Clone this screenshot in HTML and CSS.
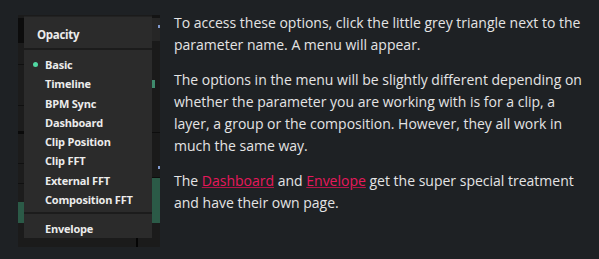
FILE: index.html
```html
<!DOCTYPE html>
<html>
<head>
<meta charset="utf-8">
<link rel="stylesheet" href="styles.css">
</head>
<body>
<div class="page">
  <div class="shot">
    <div class="strip strip-left">
      <div class="seg s-l1"></div>
      <div class="seg s-l2"></div>
      <div class="seg s-l3"></div>
      <div class="seg s-green s-l4"></div>
      <div class="seg s-l5"></div>
    </div>
    <div class="strip strip-right">
      <div class="seg s-r1"></div>
      <div class="seg s-r2"><span class="r-dot"></span></div>
      <div class="seg s-r3"><span class="r-tick"></span></div>
      <div class="seg s-r4"><span class="r-dot low"></span></div>
      <div class="seg s-green s-r5"></div>
      <div class="seg s-r6"></div>
    </div>
    <span class="bb-mark"></span>
    <div class="menu">
      <div class="menu-head">Opacity</div>
      <ul class="menu-list">
        <li class="item active">Basic</li>
        <li class="item">Timeline</li>
        <li class="item">BPM Sync</li>
        <li class="item">Dashboard</li>
        <li class="item">Clip Position</li>
        <li class="item">Clip FFT</li>
        <li class="item">External FFT</li>
        <li class="item">Composition FFT</li>
      </ul>
      <ul class="menu-list last">
        <li class="item">Envelope</li>
      </ul>
    </div>
  </div>
  <div class="text">
    <p>To access these options, click the little grey triangle next to the parameter name. A menu will appear.</p>
    <p>The options in the menu will be slightly different depending on whether the parameter you are working with is for a clip, a layer, a group or the composition. However, they all work in much the same way.</p>
    <p>The <a href="#">Dashboard</a> and <a href="#">Envelope</a> get the super special treatment and have their own page.</p>
  </div>
</div>
</body>
</html>
```
FILE: styles.css
```css
* { box-sizing: border-box; }
html, body { margin: 0; padding: 0; }
body {
  background: #1e2124;
  width: 599px;
  height: 259px;
  overflow: hidden;
}
.page {
  display: flex;
  align-items: flex-start;
}
.shot {
  position: relative;
  margin-left: 18px;
  margin-top: 15px;
  width: 142px;
  height: 232px;
  background: #1b1b1b;
  display: flex;
  justify-content: space-between;
}
.strip {
  display: flex;
  flex-direction: column;
  height: 232px;
}
.strip-left { width: 6px; }
.strip-right { width: 8px; }
.seg { position: relative; flex: none; }
.s-green { background: #2b5a47; }
.s-l1 { height: 3px; background: #1b1b1b; }
.s-l2 { height: 25px; background: #0c0c0c; }
.s-l3 {
  height: 159px;
  background: #1c1c1c;
  background-image:
    linear-gradient(#101010, #101010),
    linear-gradient(#101010, #101010),
    linear-gradient(#0a0a0a, #0a0a0a),
    linear-gradient(#101010, #101010),
    linear-gradient(#101010, #101010),
    linear-gradient(#101010, #101010);
  background-repeat: no-repeat;
  background-size: 6px 1px, 6px 1px, 6px 3px, 6px 1px, 6px 1px, 6px 1px;
  background-position: 0 21px, 0 62px, 0 88px, 0 120px, 0 140px, 0 160px;
}
.s-l4 { height: 21px; }
.s-l5 { height: 24px; background: #1b1b1b; }
.s-r1 { height: 3px; background: #141414; }
.s-r2 { height: 23px; background: #262626; }
.s-r3 { height: 92px; background: #1a1a1a; border-bottom: 1px solid #0d0d0d; }
.s-r4 { height: 45px; background: #1a1a1a; border-bottom: 1px solid #0d0d0d; }
.s-r5 { height: 45px; }
.s-r6 { height: 24px; background: #1b1b1b; }
.r-dot {
  position: absolute;
  right: 0; top: 7px;
  width: 2px; height: 3px;
  background: #7f98cc;
}
.r-dot.low { top: 33px; }
.r-tick {
  position: absolute;
  left: 0; top: 39px;
  width: 3px; height: 8px;
  background: #3f8a6c;
}
.bb-mark {
  position: absolute;
  left: 118px; bottom: 0;
  width: 2px; height: 10px;
  background: #050505;
}
.menu {
  position: absolute;
  left: 6px; top: 1px;
  width: 128px;
  height: 222px;
  background: #2b2b2b;
  border-top: 1px solid #222;
  font-family: "Open Sans", "DejaVu Sans", sans-serif;
  font-weight: 700;
  color: #ececec;
}
.menu-head {
  height: 33px;
  padding-left: 13px;
  font-size: 11.5px;
  letter-spacing: -0.3px;
  line-height: 36px;
  border-bottom: 2px solid #1c1c1c;
}
.menu-list {
  list-style: none;
  margin: 0;
  padding: 5px 0 3px;
}
.menu-list.last {
  border-top: 2px solid #1c1c1c;
  padding-top: 5px;
  padding-bottom: 0;
}
.item {
  position: relative;
  height: 19.3px;
  line-height: 19.3px;
  padding-left: 21px;
  font-size: 11px;
  letter-spacing: -0.2px;
}
.item.active::before {
  content: "";
  position: absolute;
  left: 9px; top: 7px;
  width: 5px; height: 5px;
  border-radius: 50%;
  background: #50d8a2;
}
.text {
  margin-left: 14px;
  width: 418px;
  font-family: "Open Sans", sans-serif;
  font-size: 14px;
  line-height: 22px;
  color: #e4e4e4;
  padding-top: 12px;
}
.text p { margin: 0 0 13px; }
.text a { color: #e8185c; text-decoration: underline; text-decoration-color: #b01448; }
```
